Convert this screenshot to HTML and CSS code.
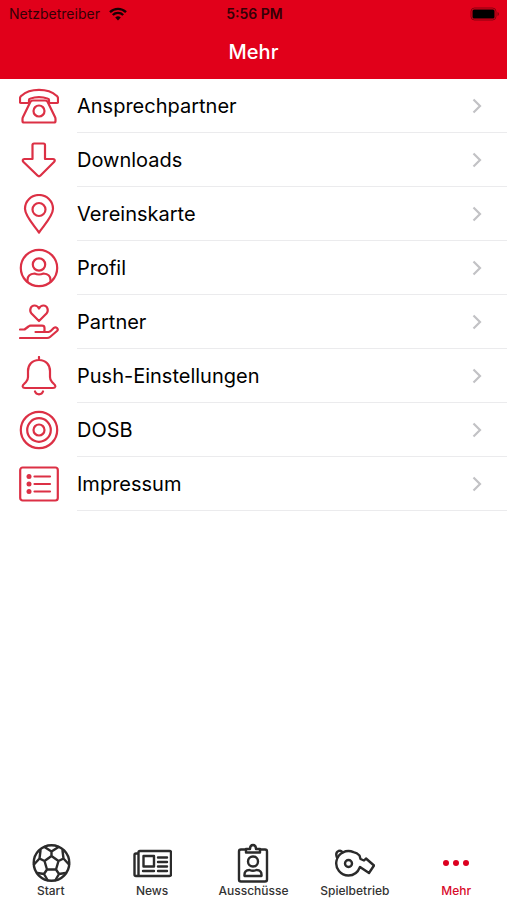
FILE: index.html
```html
<!DOCTYPE html>
<html lang="de">
<head>
    <meta charset="utf-8">
    <meta name="viewport" content="width=device-width, initial-scale=1">
    <title>Mehr</title>
    <link rel="stylesheet" href="styles.css">
</head>
<body>
    <header class="header">
        <div class="status-bar">
            <span class="carrier">Netzbetreiber
                <svg class="wifi" viewBox="0 0 18 14" aria-hidden="true">
                    <path d="M1 5.2a11.4 11.4 0 0 1 16 0M3.8 8a7.4 7.4 0 0 1 10.4 0" fill="none" stroke="currentColor" stroke-width="2.4"/>
                    <path d="M9 13.6l-2.8-3a4 4 0 0 1 5.6 0z" fill="currentColor"/>
                </svg>
            </span>
            <span class="time">5:56 PM</span>
            <span class="status-right">
                <svg class="battery" viewBox="0 0 30 14" aria-hidden="true">
                    <rect x="1" y="1" width="25" height="12" rx="3.5" fill="none" stroke="#000" stroke-opacity=".4"/>
                    <rect x="2.500" y="2.500" width="22" height="9" rx="1.5" fill="#000"/>
                    <path d="M27.5 5v4q1.5-.6 1.500-2t-1.500-2z" fill="#000" fill-opacity=".4"/>
                </svg>
            </span>
        </div>
        <h1>Mehr</h1>
    </header>

    <main>
        <ul class="menu">
            <li>
                <a href="#ansprechpartner">
                    <svg class="icon" viewBox="0 0 40 40" aria-hidden="true">
                        <path d="M2 17h7q1 0 1-1v-2q0-1 1-1.300 9-3 18 0 1 .3 1 1.300v2q0 1 1 1h7q1 0 1-1v-3.500q0-1.800-1.500-2.800C29 2 11 2 2.500 9.700 1 10.700 1 11.500 1 12.500V16q0 1 1 1z"/>
                        <path d="M14 14.500h12q2 0 2.700 1.500L36 31q.5 1 .5 2v2q0 1.500-1.500 1.500H5q-1.500 0-1.500-1.500v-2q0-1 .5-2l7.300-15q.7-1.500 2.700-1.500z"/>
                        <circle cx="20" cy="25" r="5.500"/>
                    </svg>
                    <span>Ansprechpartner</span>
                    <svg class="chevron" viewBox="0 0 10 16" aria-hidden="true"><path d="M1.500 1.500L8 8l-6.500 6.500"/></svg>
                </a>
            </li>
            <li>
                <a href="#downloads">
                    <svg class="icon" viewBox="0 0 40 40" aria-hidden="true">
                        <path d="M15 3.500h9.500q1.500 0 1.500 1.500v14h8q3 .5 1 3L21.500 35.500q-1.500 1.500-3 0L4.500 22q-2-2.500 1-3h8V5q0-1.500 1.500-1.500z"/>
                    </svg>
                    <span>Downloads</span>
                    <svg class="chevron" viewBox="0 0 10 16" aria-hidden="true"><path d="M1.500 1.500L8 8l-6.500 6.500"/></svg>
                </a>
            </li>
            <li>
                <a href="#vereinskarte">
                    <svg class="icon" viewBox="0 0 40 40" aria-hidden="true">
                        <path d="M20 38.500C14 30 6 22 6 14.800a14 13.800 0 0 1 28 0C34 22 26 30 20 38.500z"/>
                        <circle cx="20" cy="15.500" r="6.500"/>
                    </svg>
                    <span>Vereinskarte</span>
                    <svg class="chevron" viewBox="0 0 10 16" aria-hidden="true"><path d="M1.500 1.500L8 8l-6.500 6.500"/></svg>
                </a>
            </li>
            <li>
                <a href="#profil">
                    <svg class="icon" viewBox="0 0 40 40" aria-hidden="true">
                        <circle cx="20" cy="20" r="18.200"/>
                        <circle cx="20" cy="16.500" r="6.200"/>
                        <path d="M8.500 34v-2q0-6 7-6.500 4.500 2 9 0 7 .5 7 6.500v2"/>
                    </svg>
                    <span>Profil</span>
                    <svg class="chevron" viewBox="0 0 10 16" aria-hidden="true"><path d="M1.500 1.500L8 8l-6.500 6.500"/></svg>
                </a>
            </li>
            <li>
                <a href="#partner">
                    <svg class="icon" viewBox="0 0 40 40" aria-hidden="true">
                        <path d="M20 19l-7.500-7.500C10 8.500 11.500 3.500 15.500 3.500q3 0 4.500 3 1.500-3 4.500-3c4 0 5.500 5 3 8z"/>
                        <path d="M1 27.500h4.500l4-3q1-.8 2-.8H23q2.500 0 2.500 2.300v2.500q0 1.500-1.500 1.500h-7.500M25.500 30h4q1.500-.2 2.500-1.200l3-3q1.500-1 3 .2 1.500 1.500 0 3l-7 6q-1.200 1-3 1H1"/>
                    </svg>
                    <span>Partner</span>
                    <svg class="chevron" viewBox="0 0 10 16" aria-hidden="true"><path d="M1.500 1.500L8 8l-6.500 6.500"/></svg>
                </a>
            </li>
            <li>
                <a href="#push">
                    <svg class="icon" viewBox="0 0 40 40" aria-hidden="true">
                        <path d="M20 1v3M20 4c-7 0-11 5-11 11v6q0 3-2 5l-2 2q-1.500 1.300-1.300 2.500.3 1.500 2.300 1.500h28q2 0 2.300-1.500.2-1.200-1.300-2.500l-2-2q-2-2-2-5v-6c0-6-4-11-11-11zM16 35.500q1 2.800 4 2.800t4-2.800"/>
                    </svg>
                    <span>Push-Einstellungen</span>
                    <svg class="chevron" viewBox="0 0 10 16" aria-hidden="true"><path d="M1.500 1.500L8 8l-6.500 6.500"/></svg>
                </a>
            </li>
            <li>
                <a href="#dosb">
                    <svg class="icon" viewBox="0 0 40 40" aria-hidden="true">
                        <circle cx="20" cy="20" r="18.200"/>
                        <circle cx="20" cy="20" r="11.800"/>
                        <circle cx="20" cy="20" r="5.500"/>
                    </svg>
                    <span>DOSB</span>
                    <svg class="chevron" viewBox="0 0 10 16" aria-hidden="true"><path d="M1.500 1.500L8 8l-6.500 6.500"/></svg>
                </a>
            </li>
            <li>
                <a href="#impressum">
                    <svg class="icon" viewBox="0 0 40 40" aria-hidden="true">
                        <rect x="1.200" y="3.500" width="37.600" height="33" rx="2.500"/>
                        <path d="M15.500 12.500h15.500M15.500 20h15.500M15.500 27.500h15.500"/>
                        <g class="bullets">
                            <circle cx="10" cy="12.500" r="2.500"/>
                            <circle cx="10" cy="20" r="2.500"/>
                            <circle cx="10" cy="27.500" r="2.500"/>
                        </g>
                    </svg>
                    <span>Impressum</span>
                    <svg class="chevron" viewBox="0 0 10 16" aria-hidden="true"><path d="M1.500 1.500L8 8l-6.500 6.500"/></svg>
                </a>
            </li>
        </ul>
    </main>

    <nav class="tabs">
        <a href="#start">
            <svg viewBox="0 0 40 40" aria-hidden="true">
                <circle cx="20.500" cy="20" r="17.800"/>
                <path d="M20.500 13l7 5-2.500 8.500h-9L13.500 18zM20.500 13V8.500M27.500 18l5-2.500M25 26.500l3 4.500M16 26.500l-3 4.500M13.500 18l-5-2.500M20.500 8.500L13.500 4M20.500 8.500L27.500 4M32.500 15.500l-1-8M32.500 15.500l5.500 6M28 31l6.500-1M28 31L24.500 37M13 31l3.500 6M13 31L6.500 30M8.500 15.500l-5.500 6M8.500 15.500l1-8"/>
            </svg>
            Start
        </a>
        <a href="#news">
            <svg viewBox="0 0 40 40" aria-hidden="true">
                <path d="M6.500 32V9.500q0-1.500 1.500-1.500h29.500q1.500 0 1.500 1.500v22q0 1.500-1.500 1.500H4q-1.500 0-1.500-1.500V12q0-1.500 1.500-1.500h2.500"/>
                <path d="M11.500 13h10.500v10.500h-10.500zM26 14.500h9M26 19h9M26 23.500h9M11 28h11M26 28h9"/>
            </svg>
            News
        </a>
        <a href="#ausschuesse">
            <svg viewBox="0 0 40 40" aria-hidden="true">
                <path d="M13 6.500H8q-2 0-2 2v28q0 2 2 2h24q2 0 2-2v-28q0-2-2-2h-5"/>
                <path d="M13 9.500V6h4q0-4 3-4t3 4h4v3.500z"/>
                <circle cx="20" cy="18.500" r="5"/>
                <path d="M11.500 33q-.5-6 5-6 3.500 1.500 7 0 5.500 0 5 6z"/>
            </svg>
            Ausschüsse
        </a>
        <a href="#spielbetrieb">
            <svg viewBox="0 0 40 40" aria-hidden="true">
                <path d="M24.500 12.500l1 3.500 3.500 1.500 2-2 8 7-5 7.500-9-6C23 29 19 32.500 13.500 32.500a12.200 12.200 0 1 1 5-23.300q3.500.8 6 3.300z"/>
                <circle cx="13.500" cy="20.500" r="3.500"/>
                <path d="M2 14.500q-2-5 1.500-6.500 3-1 4 1.500"/>
            </svg>
            Spielbetrieb
        </a>
        <a href="#mehr" class="active" aria-current="page">
            <svg class="dots" viewBox="0 0 40 40" aria-hidden="true">
                <circle cx="10" cy="20" r="3"/>
                <circle cx="20" cy="20" r="3"/>
                <circle cx="30" cy="20" r="3"/>
            </svg>
            Mehr
        </a>
    </nav>
</body>
</html>
```
FILE: styles.css
```css
* {
    box-sizing: border-box;
}
body {
    margin: 0;
    min-height: 100vh;
    display: flex;
    flex-direction: column;
    font-family: Inter, "Liberation Sans", sans-serif;
    background-color: #fff;
    color: #000;
}
a {
    color: inherit;
    text-decoration: none;
}
.header {
    background-color: #e1001a;
    padding-bottom: 14px;
}
.status-bar {
    display: grid;
    grid-template-columns: 1fr auto 1fr;
    align-items: center;
    height: 27px;
    padding: 0 7px 0 9px;
    font-size: 14px;
    color: #350006;
}
.carrier {
    display: flex;
    align-items: center;
    gap: 9px;
}
.wifi {
    width: 18px;
    height: 14px;
    color: #180003;
}
.time {
    font-weight: 600;
}
.status-right {
    display: flex;
    justify-content: flex-end;
}
.battery {
    width: 30px;
    height: 14px;
}
h1 {
    margin: 0;
    padding-top: 12px;
    font-size: 20px;
    line-height: 26px;
    font-weight: 500;
    text-align: center;
    color: #fff;
}
main {
    flex: 1;
}
.menu {
    list-style: none;
    margin: 0;
    padding: 0;
}
.menu a {
    display: flex;
    align-items: center;
    padding-left: 19px;
}
.menu span {
    flex: 1;
    padding-top: 1px;
    font-size: 20px;
    line-height: 52px;
}
.menu li {
    background: linear-gradient(#ebebed, #ebebed) 77px 100% / 100% 1px no-repeat;
    padding-bottom: 1px;
}
.icon {
    width: 40px;
    height: 40px;
    margin-right: 18px;
    fill: none;
    stroke: #dc3045;
    stroke-width: 2.2;
    stroke-linecap: round;
    stroke-linejoin: round;
}
.bullets {
    fill: #dc3045;
    stroke: none;
}
.chevron {
    width: 10px;
    height: 16px;
    margin-right: 25px;
    fill: none;
    stroke: #c2c2c5;
    stroke-width: 2.2;
}
.tabs {
    display: grid;
    grid-template-columns: repeat(5, 1fr);
    padding-bottom: 1px;
}
.tabs a {
    display: flex;
    flex-direction: column;
    align-items: center;
    font-size: 12px;
    line-height: 16px;
    font-weight: 500;
    color: #333;
}
.tabs svg {
    width: 40px;
    height: 40px;
    fill: none;
    stroke: #2b2b2b;
    stroke-width: 2.4;
    stroke-linejoin: round;
    stroke-linecap: round;
}
.tabs .active {
    color: #d80a2a;
}
.tabs .dots {
    fill: #dc0020;
    stroke: none;
}
```
